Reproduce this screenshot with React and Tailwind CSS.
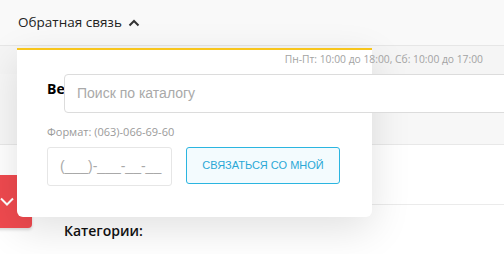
import React from "react";

const ChevronUp = () => (
  <svg width="12" height="8" viewBox="0 0 12 8" fill="none">
    <path d="M1.5 6.5L6 2l4.5 4.5" stroke="#333" strokeWidth="2" />
  </svg>
);

const ChevronDown = () => (
  <svg width="14" height="9" viewBox="0 0 14 9" fill="none">
    <path d="M1 1.5l6 6 6-6" stroke="#fff" strokeWidth="2" />
  </svg>
);

export default function App() {
  return (
    <div className="relative w-[504px] h-[254px] overflow-hidden bg-white font-['Open_Sans',sans-serif] text-[#222]">
      {/* Header */}
      <div className="h-[46px] bg-[#f9f9f9] border-b border-[#e6e6e6] flex items-center pl-[18px] gap-[6px]">
        <span className="text-[13.5px]">Обратная связь</span>
        <ChevronUp />
      </div>

      {/* Hours bar */}
      <div className="h-[29px] bg-[#f5f5f5] border-b border-[#dedede] flex items-center justify-end pr-[21px]">
        <span className="relative z-20 text-[10.3px] text-[#a3a3a3]">Пн-Пт: 10:00 до 18:00, Сб: 10:00 до 17:00</span>
      </div>

      {/* Search row */}
      <div className="h-[71px] bg-[#f7f7f7] border-b border-[#e8e8e8] pl-[64px]">
        <div className="relative z-20 w-[460px] h-[39px] bg-white border border-[#dcdcdc] rounded-l-[4px] flex items-center pl-[12px] -mt-px">
          <span className="text-[14px] text-[#a9a9a9] font-['Liberation_Sans',sans-serif]">Поиск по каталогу</span>
        </div>
      </div>

      {/* White row */}
      <div className="h-[60px] bg-white border-b border-[#ebebeb]" />

      {/* Categories */}
      <div className="pl-[64px] pt-[13px]">
        <span className="text-[14px] font-semibold text-[#111]">Категории:</span>
      </div>

      {/* Red toggle button */}
      <div className="absolute left-[-18px] top-[175px] w-[50px] h-[53px] bg-[#ef4a4f] rounded-[4px] flex items-center justify-center shadow-[0_2px_3px_rgba(0,0,0,0.15)]">
        <ChevronDown />
      </div>

      {/* Feedback dropdown */}
      <div className="absolute z-10 left-[17px] top-[48px] w-[355px] h-[169px] bg-white border-t-2 border-[#f7c51c] rounded-b-[6px] shadow-[0_12px_40px_rgba(0,0,0,0.12)] px-[30px]">
        <div className="pt-[28px] w-[17px] overflow-hidden whitespace-nowrap text-[14px] font-bold text-black">Ведите номер телефона</div>
        <div className="mt-[25px] text-[11px] text-[#9a9a9a]">Формат: (063)-066-69-60</div>
        <div className="mt-[6px] flex items-start gap-[14px]">
          <div className="w-[125px] h-[39px] border border-[#e6e6e6] rounded-[3px] flex items-center pl-[12px]">
            <span className="text-[14px] text-[#a9a9a9] font-['Liberation_Sans',sans-serif]">(___)-___-__-__</span>
          </div>
          <button className="w-[154px] h-[37px] border border-[#2bb5e0] bg-[#f3fbfe] rounded-[3px] text-[11px] text-[#2aa8d6] font-['Liberation_Sans',sans-serif]">
            СВЯЗАТЬСЯ СО МНОЙ
          </button>
        </div>
      </div>
    </div>
  );
}
